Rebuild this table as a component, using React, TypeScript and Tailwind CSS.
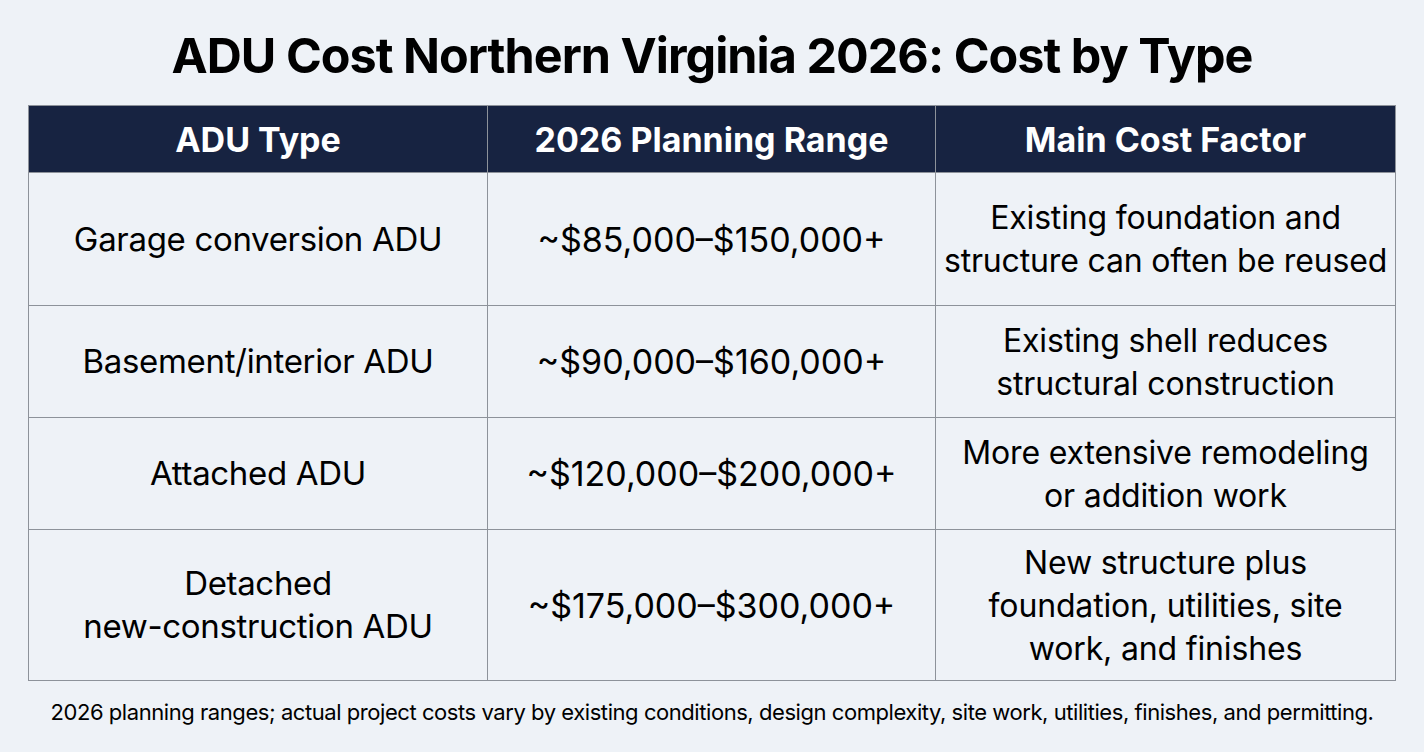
import React from 'react';

type Row = {
  type: React.ReactNode;
  range: string;
  factor: React.ReactNode;
  h: string;
};

const rows: Row[] = [
  {
    type: 'Garage conversion ADU',
    range: '~$85,000–$150,000+',
    factor: (
      <>
        Existing foundation and
        <br />
        structure can often be reused
      </>
    ),
    h: 'h-[133px]',
  },
  {
    type: 'Basement/interior ADU',
    range: '~$90,000–$160,000+',
    factor: (
      <>
        Existing shell reduces
        <br />
        structural construction
      </>
    ),
    h: 'h-[112px]',
  },
  {
    type: 'Attached ADU',
    range: '~$120,000–$200,000+',
    factor: (
      <>
        More extensive remodeling
        <br />
        or addition work
      </>
    ),
    h: 'h-[112px]',
  },
  {
    type: (
      <>
        Detached
        <br />
        new-construction ADU
      </>
    ),
    range: '~$175,000–$300,000+',
    factor: (
      <>
        New structure plus
        <br />
        foundation, utilities, site
        <br />
        work, and finishes
      </>
    ),
    h: 'h-[151px]',
  },
];

const App: React.FC = () => {
  return (
    <div
      className="w-[1424px] h-[752px] bg-[#eef2f7] text-black flex flex-col items-center"
      style={{ fontFamily: 'Inter, "Noto Sans", sans-serif' }}
    >
      {/* Title */}
      <h1 className="mt-[26px] h-[79px] text-[48.5px] leading-[60px] font-bold tracking-[-0.02em]">
        ADU Cost Northern Virginia 2026: Cost by Type
      </h1>

      {/* Table */}
      <table className="w-[1367px] border-collapse table-fixed">
        <colgroup>
          <col className="w-[459px]" />
          <col className="w-[448px]" />
          <col className="w-[460px]" />
        </colgroup>
        <thead>
          <tr className="h-[67px] bg-[#172341] text-white">
            <th className="border border-[#8d929a] text-[34px] font-bold">ADU Type</th>
            <th className="border border-[#8d929a] text-[34px] font-bold">2026 Planning Range</th>
            <th className="border border-[#8d929a] text-[34px] font-bold">Main Cost Factor</th>
          </tr>
        </thead>
        <tbody>
          {rows.map((r, i) => (
            <tr key={i} className={r.h}>
              <td className="border border-[#8d929a] text-center text-[33px] leading-[43px] tracking-[-0.01em]">
                {r.type}
              </td>
              <td className="border border-[#8d929a] text-center text-[34px] leading-[43px]">
                {r.range}
              </td>
              <td className="border border-[#8d929a] text-center text-[32px] leading-[43px] tracking-[-0.005em]">
                {r.factor}
              </td>
            </tr>
          ))}
        </tbody>
      </table>

      {/* Footnote */}
      <p className="mt-[17px] text-[22px] leading-[29px] tracking-[-0.02em]">
        2026 planning ranges; actual project costs vary by existing conditions, design complexity, site work,
        utilities, finishes, and permitting.
      </p>
    </div>
  );
};

export default App;
